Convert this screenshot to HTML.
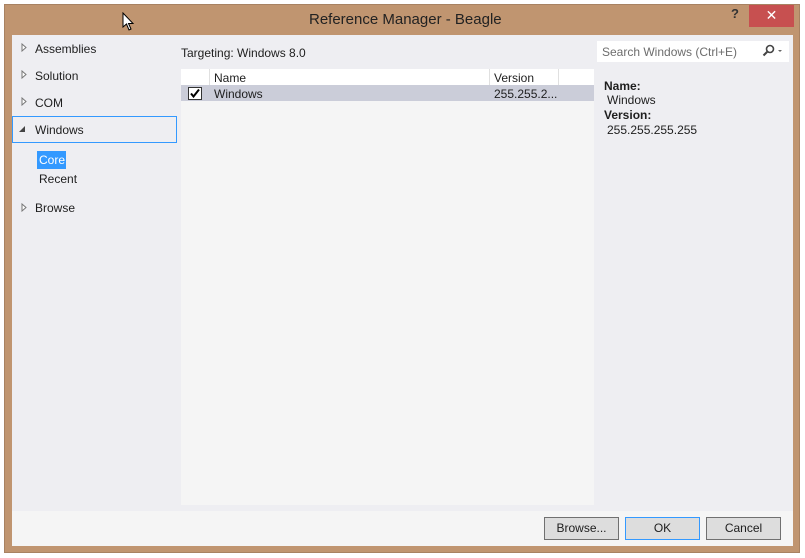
<!DOCTYPE html>
<html><head><style>
*{margin:0;padding:0;box-sizing:border-box}
body{width:805px;height:558px;background:#fff;font-family:"Liberation Sans",sans-serif;font-size:12px;color:#1e1e1e;position:relative;overflow:hidden}
.a{position:absolute}
.win{left:4px;top:4px;width:796px;height:549px;background:#c09570;border:1px solid #a88262}
.t{white-space:nowrap}
.btn{position:absolute;top:517px;height:23px;background:#dddddd;border:1px solid #707070;text-align:center;line-height:21px}
</style></head><body>
<div class="a win"></div>
<div class="a t" style="left:309px;top:11px;font-size:15px;color:#222">Reference Manager - Beagle</div>
<div class="a t" style="left:731px;top:6px;font-size:13px;font-weight:bold;color:#333">?</div>
<div class="a" style="left:749px;top:5px;width:45px;height:22px;background:#c75050;color:#fff;text-align:center;line-height:21px;font-size:14px">✕</div>
<svg class="a" style="left:122px;top:12px" width="14" height="20"><path d="M1 1 L1 15 L4.5 12 L7 18 L9 17 L6.5 11.5 L11 11.5 Z" fill="#fff" stroke="#000" stroke-width="1"/></svg>
<div class="a" style="left:12px;top:35px;width:781px;height:476px;background:#eeeef2"></div>
<div class="a" style="left:12px;top:511px;width:781px;height:35px;background:#f5f5f5"></div>
<svg class="a" style="left:21px;top:43px" width="6" height="9"><path d="M1 1 L5 4.5 L1 8 Z" fill="#fff" stroke="#777"/></svg><div class="a t" style="left:35px;top:42px">Assemblies</div>
<svg class="a" style="left:21px;top:70px" width="6" height="9"><path d="M1 1 L5 4.5 L1 8 Z" fill="#fff" stroke="#777"/></svg><div class="a t" style="left:35px;top:69px">Solution</div>
<svg class="a" style="left:21px;top:97px" width="6" height="9"><path d="M1 1 L5 4.5 L1 8 Z" fill="#fff" stroke="#777"/></svg><div class="a t" style="left:35px;top:96px">COM</div>
<div class="a" style="left:12px;top:116px;width:165px;height:27px;border:1px solid #3399ff"></div>
<svg class="a" style="left:19px;top:126px" width="7" height="7"><path d="M6 0 L6 6 L0 6 Z" fill="#444"/></svg>
<div class="a t" style="left:35px;top:123px">Windows</div>
<div class="a t" style="left:37px;top:151px;width:29px;height:18px;background:#3399ff;color:#fff;padding:2px 0 0 2px">Core</div>
<div class="a t" style="left:39px;top:172px">Recent</div>
<svg class="a" style="left:21px;top:203px" width="6" height="9"><path d="M1 1 L5 4.5 L1 8 Z" fill="#fff" stroke="#777"/></svg><div class="a t" style="left:35px;top:201px">Browse</div>
<div class="a t" style="left:181px;top:46px">Targeting: Windows 8.0</div>
<div class="a" style="left:181px;top:69px;width:413px;height:436px;background:#f5f5f5"></div>
<div class="a" style="left:181px;top:69px;width:413px;height:16px;background:#fff"></div>
<div class="a" style="left:209px;top:69px;width:1px;height:16px;background:#e0e0e0"></div>
<div class="a" style="left:489px;top:69px;width:1px;height:16px;background:#e0e0e0"></div>
<div class="a" style="left:558px;top:69px;width:1px;height:16px;background:#e0e0e0"></div>
<div class="a t" style="left:214px;top:71px">Name</div>
<div class="a t" style="left:494px;top:71px">Version</div>
<div class="a" style="left:181px;top:85px;width:413px;height:16px;background:#cbcdd9"></div>
<div class="a" style="left:188px;top:87px;width:14px;height:13px;background:#fff;border:1px solid #333"></div>
<svg class="a" style="left:189px;top:88px" width="12" height="11"><path d="M2 5.5 L4.5 8.5 L10 1.5" fill="none" stroke="#000" stroke-width="2"/></svg>
<div class="a t" style="left:214px;top:87px">Windows</div>
<div class="a t" style="left:494px;top:87px">255.255.2...</div>
<div class="a" style="left:597px;top:41px;width:192px;height:21px;background:#fff"></div>
<div class="a t" style="left:602px;top:45px;color:#6d6d6d">Search Windows (Ctrl+E)</div>
<svg class="a" style="left:761px;top:44px" width="24" height="14"><circle cx="9" cy="5" r="3.5" fill="none" stroke="#444" stroke-width="1.6"/><path d="M6.5 7.5 L2.5 11.5" stroke="#444" stroke-width="2"/><path d="M17 6 L21 6 L19 8 Z" fill="#666"/></svg>
<div class="a t" style="left:604px;top:79px;font-weight:bold">Name:</div>
<div class="a t" style="left:607px;top:93px">Windows</div>
<div class="a t" style="left:604px;top:108px;font-weight:bold">Version:</div>
<div class="a t" style="left:607px;top:123px">255.255.255.255</div>
<div class="btn" style="left:544px;width:75px">Browse...</div>
<div class="btn" style="left:625px;width:75px;border-color:#3399ff">OK</div>
<div class="btn" style="left:706px;width:75px">Cancel</div>
</body></html>
